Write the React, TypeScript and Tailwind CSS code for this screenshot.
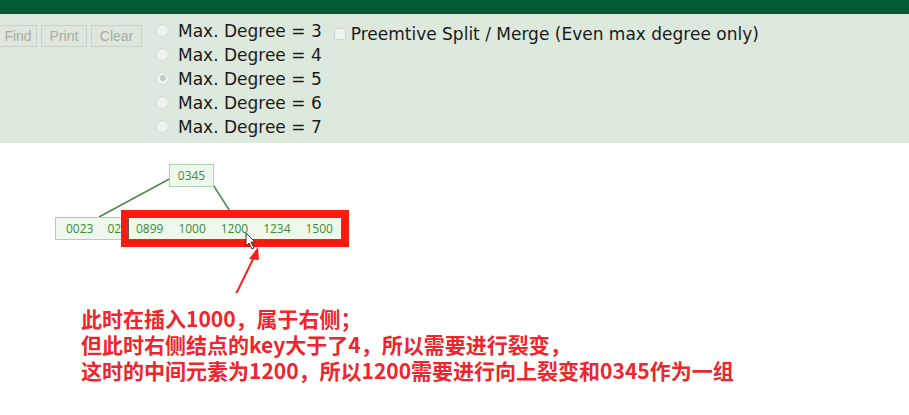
import React from "react";

const degrees = [3, 4, 5, 6, 7];

function Radio({ checked }: { checked: boolean }) {
  return (
    <span className="flex h-[13px] w-[13px] items-center justify-center rounded-full border border-[#d6ddd6] bg-[#eef3ee]">
      {checked && <span className="h-[6px] w-[6px] rounded-full bg-[#c4c9c4]" />}
    </span>
  );
}

export default function App() {
  return (
    <div className="relative h-[415px] w-[909px] overflow-hidden bg-white" style={{ fontFamily: "'DejaVu Sans', Verdana, sans-serif" }}>
      <div className="h-[14px] bg-[#005a34]" />
      <div className="flex h-[129px] bg-[#dee9dd] pt-[5px]">
        <div className="-ml-[4px] mt-[6px] flex h-[22px] gap-[4px] text-[14px] text-[#a7ada7]" style={{ fontFamily: "'Liberation Sans', Arial, sans-serif" }}>
          <div className="flex h-[22px] w-[41px] items-center justify-center border border-[#c9d2c9] bg-[#dde7dc] pl-[3px]">Find</div>
          <div className="flex h-[22px] w-[46px] items-center justify-center border border-[#c9d2c9] bg-[#dde7dc]">Print</div>
          <div className="flex h-[22px] w-[51px] items-center justify-center border border-[#c9d2c9] bg-[#dde7dc]">Clear</div>
        </div>
        <div className="ml-[14px] flex flex-col">
          {degrees.map((d) => (
            <div key={d} className="flex h-[24px] items-center text-[17px] leading-none text-[#1a1a1a]">
              <span className="-mt-[2px]">
                <Radio checked={d === 5} />
              </span>
              <span className="ml-[9px]">Max. Degree = {d}</span>
            </div>
          ))}
        </div>
        <div className="ml-[12px] mt-[3px] flex h-[24px] items-center text-[17px] leading-none text-[#1a1a1a]">
          <span className="-mt-[1px] mr-[5px] h-[12px] w-[12px] rounded-[2px] border border-[#cfd6cf] bg-[#eef3ee]" />
          <span>Preemtive Split / Merge (Even max degree only)</span>
        </div>
      </div>

      <div className="relative h-[140px]">
        <svg className="absolute left-0 top-0" width="909" height="150">
          <line x1="173" y1="34" x2="99" y2="74" stroke="#4a8a4a" strokeWidth="1.5" />
          <line x1="208" y1="34" x2="235" y2="76" stroke="#4a8a4a" strokeWidth="1.5" />
          <line x1="256" y1="110" x2="236" y2="151" stroke="#ff1c1c" strokeWidth="2" />
          <polygon points="258,104 249,116 259,117" fill="#ff1c1c" />
        </svg>
        <div
          className="absolute left-[169px] top-[21px] flex h-[23px] w-[45px] items-center justify-center border border-[#a9d3a9] bg-[#eef8ec] text-[12px] text-[#3a8a3a]"
          style={{ fontFamily: "'Open Sans', sans-serif" }}
        >
          0345
        </div>
        <div
          className="absolute left-[55px] top-[74px] flex h-[23px] w-[70px] items-center border border-[#a9d3a9] bg-[#eef8ec] pl-[10px] text-[12px] text-[#3a8a3a]"
          style={{ fontFamily: "'Open Sans', sans-serif" }}
        >
          <span>0023</span>
          <span className="ml-[14px]">02</span>
        </div>
        <div className="absolute left-[121px] top-[67px] h-[37px] w-[228px] bg-[#ff1a10] p-[7px]">
          <div
            className="flex h-full w-full items-center justify-between border border-[#6b5a4a] bg-[#eef8ec] pl-[7px] pr-[8px] text-[12px] text-[#3a8a3a]"
            style={{ fontFamily: "'Open Sans', sans-serif" }}
          >
            <span>0899</span>
            <span>1000</span>
            <span>1200</span>
            <span>1234</span>
            <span>1500</span>
          </div>
        </div>
        <svg className="absolute left-[245px] top-[89px]" width="12" height="18" viewBox="0 0 12 18">
          <polygon points="1,1 1,14 4,11 7,17 9,16 6,10 10,10" fill="#ffffff" stroke="#333" strokeWidth="1" />
        </svg>
      </div>

      <div
        className="ml-[81px] mt-[22px] text-[21px] font-bold leading-[26px] text-[#f0242c]"
        style={{ fontFamily: "'Noto Sans CJK SC', 'Noto Sans', sans-serif" }}
      >
        <div>此时在插入1000，属于右侧；</div>
        <div>但此时右侧结点的key大于了4，所以需要进行裂变，</div>
        <div>这时的中间元素为1200，所以1200需要进行向上裂变和0345作为一组</div>
      </div>
    </div>
  );
}
